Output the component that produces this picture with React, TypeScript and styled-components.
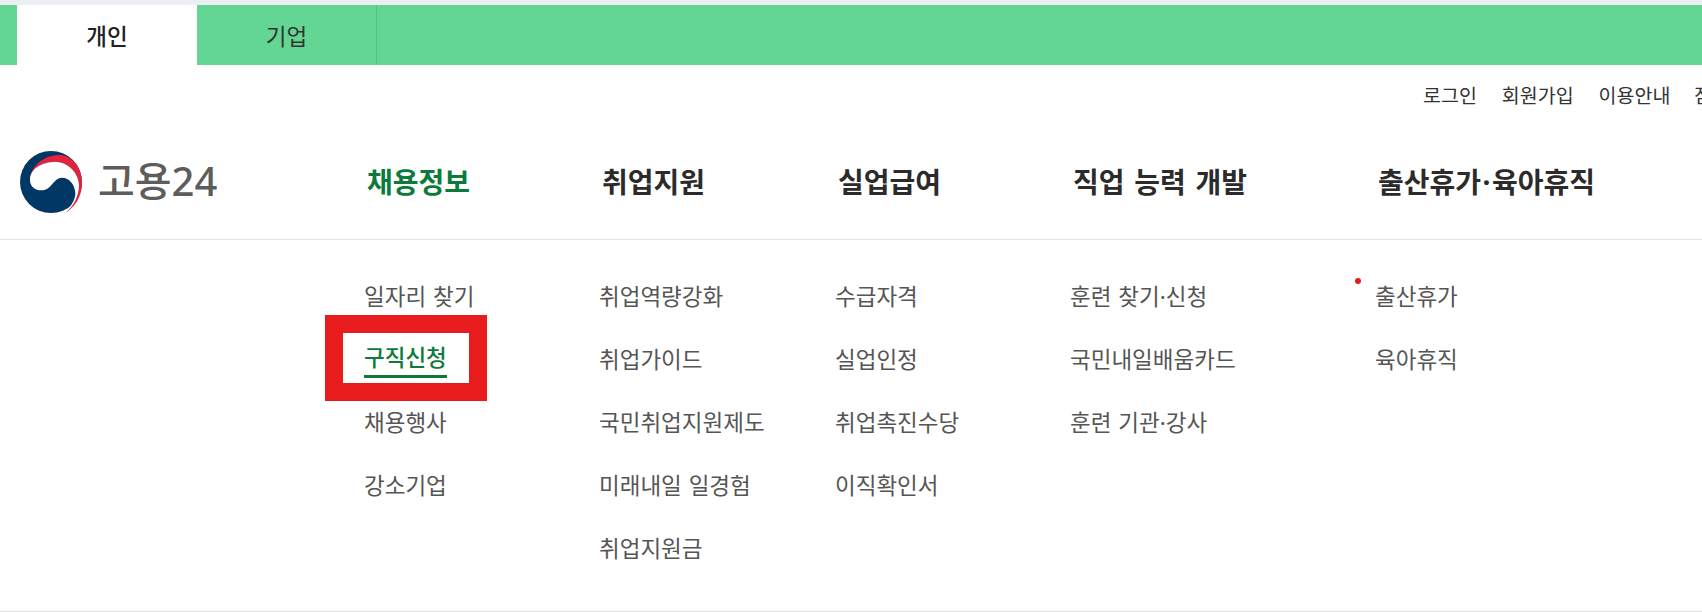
import styled, { createGlobalStyle } from 'styled-components';

const GlobalStyle = createGlobalStyle`
    html, body {
        margin: 0;
        padding: 0;
        background: #fff;
        overflow: hidden;
    }
    body {
        font-family: "Noto Sans", "Noto Sans CJK KR", sans-serif;
    }
`;

const Page = styled.div`
    width: 1702px;
    height: 612px;
    position: relative;
    overflow: hidden;
    border-top: 5px solid #ebeff4;
    box-sizing: border-box;
`;

const TabBar = styled.div`
    height: 60px;
    background: #62d692;
    padding-left: 17px;
    display: flex;
`;

const Tab = styled.div<{ $active?: boolean }>`
    width: 180px;
    box-sizing: border-box;
    display: flex;
    align-items: center;
    justify-content: center;
    font-size: 22.5px;
    font-weight: ${props => props.$active ? 500 : 400};
    color: ${props => props.$active ? '#222' : '#333'};
    background: ${props => props.$active ? '#fff' : 'transparent'};
    border-right: ${props => props.$active ? 'none' : '1px solid #55c283'};
`;

const UtilBar = styled.div`
    height: 58px;
    display: flex;
    align-items: center;
    padding-left: 1423px;
    white-space: nowrap;
    font-size: 19.5px;
    color: #333;
`;

const UtilLink = styled.span`
    margin-right: 25px;
`;

const UtilDivider = styled.span`
    width: 2px;
    height: 16px;
    background: #e0e0e0;
    margin: 0 10px 0 -11px;
`;

const MainNav = styled.div`
    height: 117px;
    box-sizing: border-box;
    display: flex;
    align-items: center;
    border-bottom: 1px solid #e2e2e2;
`;

const LogoLink = styled.div`
    width: 367px;
    padding-left: 20px;
    box-sizing: border-box;
    display: flex;
    align-items: center;
    gap: 16px;
`;

const LogoMark = styled.svg`
    margin-top: 2px;
    flex-shrink: 0;
`;

const LogoText = styled.span`
    font-size: 40px;
    font-weight: 500;
    color: #5d5d5d;
    line-height: 1;
    white-space: nowrap;
`;

const NavItem = styled.div<{ $width: number; $active?: boolean }>`
    width: ${props => props.$width}px;
    font-size: 28px;
    font-weight: 700;
    word-spacing: 2.5px;
    white-space: nowrap;
    color: ${props => props.$active ? '#0b7a3b' : '#2b2b2b'};
`;

const NavDot = styled.span`
    margin: 0 1.5px;
`;

const SubMenu = styled.div`
    height: 372px;
    box-sizing: border-box;
    border-bottom: 1px solid #e2e2e2;
    padding: 24px 0 0 364px;
    display: flex;
`;

const SubColumn = styled.div<{ $width: number }>`
    width: ${props => props.$width}px;
    display: flex;
    flex-direction: column;
`;

const SubItem = styled.div`
    height: 63px;
    display: flex;
    align-items: center;
    font-size: 22.5px;
    word-spacing: 1px;
    color: #555;
    white-space: nowrap;
`;

const ActiveLabel = styled.span`
    color: #0b7a3b;
    font-weight: 500;
    border-bottom: 3px solid #0b7a3b;
    line-height: 35px;
`;

const Highlight = styled.div`
    position: absolute;
    left: 325px;
    top: 310px;
    width: 162px;
    height: 86px;
    box-sizing: border-box;
    border: 18px solid #e81c1c;
`;

const RedDot = styled.div`
    position: absolute;
    left: 1355px;
    top: 273px;
    width: 6px;
    height: 6px;
    border-radius: 50%;
    background: #e81c1c;
`;

const Logo = () => (
    <LogoMark width="62" height="62" viewBox="20 12 186 186">
        <circle cx="113" cy="105" r="93" fill="#003764" />
        <path d="M52 88C58 50 100 20 145 24C185 32 207 70 206 110C205 150 185 180 155 198C182 175 197 150 197 115C197 85 172 46 125 44C90 44 60 60 52 88Z" fill="#e6213c" />
        <path d="M50 95C52 65 85 45 125 44C172 46 197 85 197 115C197 150 180 178 155 198C172 178 186 160 186 137C184 112 168 92 146 92C120 92 115 130 85 130C65 130 48 118 50 95Z" fill="#fff" />
    </LogoMark>
);

const App = () => (
    <Page>
        <GlobalStyle />
        <TabBar>
            <Tab $active>개인</Tab>
            <Tab>기업</Tab>
        </TabBar>
        <UtilBar>
            <UtilLink>로그인</UtilLink>
            <UtilLink>회원가입</UtilLink>
            <UtilLink>이용안내</UtilLink>
            <UtilDivider />
            <span>잠금</span>
        </UtilBar>
        <MainNav>
            <LogoLink>
                <Logo />
                <LogoText>고용24</LogoText>
            </LogoLink>
            <NavItem $width={235} $active>채용정보</NavItem>
            <NavItem $width={236}>취업지원</NavItem>
            <NavItem $width={235}>실업급여</NavItem>
            <NavItem $width={305}>직업 능력 개발</NavItem>
            <NavItem $width={220}>출산휴가<NavDot>·</NavDot>육아휴직</NavItem>
        </MainNav>
        <SubMenu>
            <SubColumn $width={235}>
                <SubItem>일자리 찾기</SubItem>
                <SubItem><ActiveLabel>구직신청</ActiveLabel></SubItem>
                <SubItem>채용행사</SubItem>
                <SubItem>강소기업</SubItem>
            </SubColumn>
            <SubColumn $width={236}>
                <SubItem>취업역량강화</SubItem>
                <SubItem>취업가이드</SubItem>
                <SubItem>국민취업지원제도</SubItem>
                <SubItem>미래내일 일경험</SubItem>
                <SubItem>취업지원금</SubItem>
            </SubColumn>
            <SubColumn $width={235}>
                <SubItem>수급자격</SubItem>
                <SubItem>실업인정</SubItem>
                <SubItem>취업촉진수당</SubItem>
                <SubItem>이직확인서</SubItem>
            </SubColumn>
            <SubColumn $width={305}>
                <SubItem>훈련 찾기·신청</SubItem>
                <SubItem>국민내일배움카드</SubItem>
                <SubItem>훈련 기관·강사</SubItem>
            </SubColumn>
            <SubColumn $width={200}>
                <SubItem>출산휴가</SubItem>
                <SubItem>육아휴직</SubItem>
            </SubColumn>
        </SubMenu>
        <Highlight />
        <RedDot />
    </Page>
);

export default App;
